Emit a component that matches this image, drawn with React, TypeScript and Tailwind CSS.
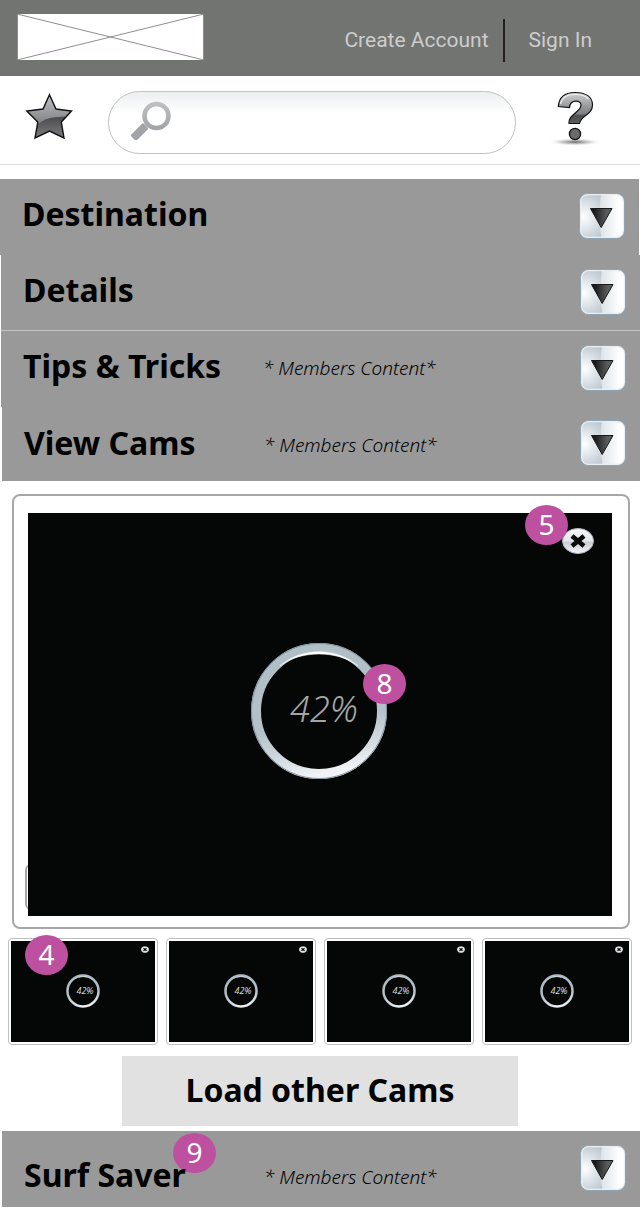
import { useId } from "react";

function StarIcon() {
  return (
    <svg viewBox="0 0 48 47" className="h-[47px] w-12" aria-hidden="true">
      <defs>
        <linearGradient id="star-fill" x1="0" y1="0" x2="0" y2="1">
          <stop offset="0" stopColor="#c4c5c8" />
          <stop offset="0.55" stopColor="#8b8c8f" />
          <stop offset="1" stopColor="#77787a" />
        </linearGradient>
        <linearGradient id="star-shade" x1="0" y1="0" x2="0" y2="1">
          <stop offset="0" stopColor="#4b4b4d" />
          <stop offset="1" stopColor="#808183" />
        </linearGradient>
        <clipPath id="star-clip">
          <path d="M24.5 1.5 L31 16 L47 18 L36.3 29 L39 45 L24.5 38 L10 45 L12.8 29 L1.5 18 L18 16 Z" />
        </clipPath>
      </defs>
      <g clipPath="url(#star-clip)">
        <rect width="48" height="47" fill="url(#star-fill)" />
        <path d="M8 36 C16 26 27 23 42 24 L48 47 L0 47 Z" fill="url(#star-shade)" />
      </g>
      <path
        d="M24.5 1.8 L31 16 L46.5 18 L36.3 29 L39 45 L24.5 38 L10 45 L12.8 29 L1.8 18 L18 16 Z"
        fill="none"
        stroke="#111"
        strokeWidth="1.4"
      />
    </svg>
  );
}

function HelpIcon() {
  return (
    <svg viewBox="0 0 56 58" className="h-[58px] w-14" aria-hidden="true">
      <defs>
        <linearGradient id="help-fill" x1="0" y1="0" x2="0" y2="1">
          <stop offset="0" stopColor="#d0d1d3" />
          <stop offset="0.5" stopColor="#929396" />
          <stop offset="0.68" stopColor="#808184" />
          <stop offset="0.75" stopColor="#4c4d4f" />
          <stop offset="1" stopColor="#5d5e60" />
        </linearGradient>
        <radialGradient id="help-shadow">
          <stop offset="0" stopColor="#555" stopOpacity="0.9" />
          <stop offset="0.5" stopColor="#999" stopOpacity="0.5" />
          <stop offset="1" stopColor="#fff" stopOpacity="0" />
        </radialGradient>
      </defs>
      <ellipse cx="27" cy="52" rx="27" ry="4" fill="url(#help-shadow)" />
      <path
        d="M10.300 16.500 C11 7 17 2.500 27 2.500 C38 2.500 44.500 7 44.500 15 C44.500 25 32.500 25.500 31.500 33.500 L21 33.500 C20 24 33 22.500 33 15 C33 9.500 22 9.500 21.500 17.500 Z"
        fill="url(#help-fill)"
        stroke="#111"
        strokeWidth="1.200"
      />
      <path d="M12.500 14 C14 7 19 4.300 27 4.300 C33 4.300 38 6 40.500 9" fill="none" stroke="#ececed" strokeWidth="1.200" />
      <circle cx="27" cy="44" r="5.600" fill="#6a6b6d" stroke="#111" strokeWidth="1.300" />
    </svg>
  );
}

function SearchIcon() {
  return (
    <svg viewBox="0 0 42 40" className="h-10 w-[42px] shrink-0" aria-hidden="true">
      <defs>
        <linearGradient id="lens" x1="0" y1="0" x2="0" y2="1">
          <stop offset="0" stopColor="#bebfc0" />
          <stop offset="1" stopColor="#a2a4a6" />
        </linearGradient>
      </defs>
      <circle cx="26.500" cy="16" r="12" fill="none" stroke="url(#lens)" strokeWidth="4.500" />
      <rect x="-4" y="-9" width="8" height="18" rx="1.500" fill="#a2a4a9" transform="translate(9.500 32) rotate(45)" />
    </svg>
  );
}

function ToggleIcon() {
  const id = useId();
  return (
    <svg viewBox="0 0 46 46" className="size-[46px]" aria-hidden="true">
      <defs>
        <radialGradient id={id + "a"} cx="0.08" cy="0.52" r="0.65">
          <stop offset="0" stopColor="#ffffff" />
          <stop offset="1" stopColor="#b4c0ca" />
        </radialGradient>
        <linearGradient id={id + "b"} x1="0" y1="0" x2="1" y2="0">
          <stop offset="0" stopColor="#dce3e8" />
          <stop offset="0.8" stopColor="#fff" />
        </linearGradient>
        <linearGradient id={id + "c"} x1="0" y1="0" x2="1" y2="0">
          <stop offset="0.15" stopColor="#17191a" />
          <stop offset="0.75" stopColor="#5b5c5d" />
        </linearGradient>
      </defs>
      <rect x="0.5" y="0.5" width="45" height="45" rx="8" fill={`url(#${id}a)`} />
      <path d="M22 1 H37 A8 8 0 0 1 45 9 V37 A8 8 0 0 1 37 45 H22.500 C20 32 20 15 22 1 Z" fill={`url(#${id}b)`} />
      <rect x="1.500" y="1.500" width="43" height="43" rx="7" fill="none" stroke="#e8eef2" strokeWidth="1.500" />
      <rect x="0.5" y="0.5" width="45" height="45" rx="8" fill="none" stroke="#8fa4b2" />
      <path d="M11.500 15.500 H33 L22.200 34.500 Z" fill={`url(#${id}c)`} stroke="#17191a" />
    </svg>
  );
}

function CloseIcon({ className }: { className: string }) {
  const id = useId();
  return (
    <svg viewBox="0 0 32 26" className={className} aria-hidden="true">
      <defs>
        <linearGradient id={id} x1="0" y1="0" x2="0" y2="1">
          <stop offset="0" stopColor="#f8f9fa" />
          <stop offset="0.5" stopColor="#e2e5e9" />
          <stop offset="0.55" stopColor="#c8ced4" />
          <stop offset="1" stopColor="#f4f5f7" />
        </linearGradient>
      </defs>
      <ellipse cx="16" cy="13" rx="15.500" ry="12.500" fill={`url(#${id})`} stroke="#aeb9c1" />
      <path d="M10 8 L22 18 M22 8 L10 18" stroke="#0a0a0a" strokeWidth="4.600" />
    </svg>
  );
}

function ProgressRing({ className }: { className: string }) {
  const id = useId();
  return (
    <svg viewBox="0 0 138 138" className={className} aria-hidden="true">
      <defs>
        <linearGradient id={id + "a"} x1="0.3" y1="0" x2="0.5" y2="1">
          <stop offset="0" stopColor="#b0bec6" />
          <stop offset="0.6" stopColor="#b4c1c9" />
          <stop offset="0.85" stopColor="#d5dde2" />
          <stop offset="1" stopColor="#f1f3f6" />
        </linearGradient>
      </defs>
      <circle cx="69" cy="69" r="63" fill="none" stroke={`url(#${id}a)`} strokeWidth="10" />
      <circle cx="69" cy="69" r="67.500" fill="none" stroke="#8194a0" strokeWidth="1" />
      <path d="M30 24 C52 5 86 5 108 24 C88 8 50 8 30 24 Z" fill="#fff" stroke="#fff" strokeWidth="0.500" />
    </svg>
  );
}

function Badge({ value, className }: { value: number; className: string }) {
  return (
    <span
      className={`absolute flex h-10 w-[43px] items-center justify-center rounded-[50%] bg-[#bd519f] pb-0.5 font-['Noto_Sans',sans-serif] text-[28px] leading-none font-normal text-white ${className}`}
    >
      {value}
    </span>
  );
}

type SectionProps = {
  title: string;
  members?: boolean;
  badge?: number;
  className: string;
  textClassName?: string;
};

function Section({ title, members, badge, className, textClassName = "pb-1" }: SectionProps) {
  return (
    <section className={`flex items-center bg-[#999] pl-[22px] ${className}`}>
      <div className={`flex items-center ${textClassName}`}>
        <h2 className="w-60 shrink-0 pb-0.5 text-[32px] leading-10 font-bold">
          <span className="relative isolate">
            {title}
            {badge !== undefined && <Badge value={badge} className="-top-5 -right-[30px] -z-10" />}
          </span>
        </h2>
        {members && <p className="pt-0.5 text-[19px] leading-6 font-light italic">* Members Content*</p>}
      </div>
      <button type="button" aria-label={`Expand ${title}`} className="mr-3.5 mb-0.5 ml-auto shrink-0">
        <ToggleIcon />
      </button>
    </section>
  );
}

function Thumbnail({ index }: { index: number }) {
  return (
    <li className="relative rounded border border-[#bfc0c2] bg-white p-[2px]">
      <div className="relative flex aspect-[144/101] items-center justify-center bg-[#050706] pb-0.5">
        <ProgressRing className="size-[34px]" />
        <span className="absolute pl-1 text-[9px] leading-none text-[#d5d5d5] italic">42%</span>
        <button type="button" aria-label={`Close cam ${index}`} className="absolute top-[5px] right-1.5">
          <CloseIcon className="h-[7px] w-2" />
        </button>
      </div>
      {index === 1 && <Badge value={4} className="-top-1 left-4" />}
    </li>
  );
}

export default function App() {
  return (
    <div className="bg-white pb-1 font-['Noto_Sans',sans-serif] text-black">
      <header className="flex h-[76px] items-center justify-between bg-[#727472] pr-12 pl-[17px]">
        <svg viewBox="0 0 187 46" className="mb-0.5 h-[46px] w-[187px] bg-white" role="img" aria-label="Logo">
          <path d="M0.500 0 V46 M186.500 0 V46 M0 0 L187 46 M187 0 L0 46" stroke="#8d8e8d" fill="none" />
        </svg>
        <nav className="flex items-center pt-1 font-['Roboto',sans-serif] text-[21px] leading-7 text-[#cccdcc]">
          <a href="#create-account">Create Account</a>
          <span className="mr-6 ml-3.5 h-[43px] w-0.5 bg-[#231f20]" />
          <a href="#sign-in">Sign In</a>
        </nav>
      </header>

      <div className="flex h-[89px] items-center border-b border-[#dcdcdc] pr-9 pl-[25px]">
        <button type="button" aria-label="Favorites" className="mb-2 shrink-0">
          <StarIcon />
        </button>
        <div className="mt-1 mr-8 ml-[35px] flex h-[63px] min-w-0 flex-1 items-center rounded-full border border-[#bfc1c2] bg-linear-to-b from-[#eceeef] to-white to-35% pr-6 pb-1 pl-[21px]">
          <SearchIcon />
          <input
            type="search"
            aria-label="Search"
            className="ml-3 h-full min-w-0 flex-1 bg-transparent text-xl outline-none"
          />
        </div>
        <button type="button" aria-label="Help" className="mb-0.5 shrink-0">
          <HelpIcon />
        </button>
      </div>

      <main className="pt-3.5">
        <Section title="Destination" className="mr-px h-[76px]" />
        <Section title="Details" className="ml-px h-[76px] border-b border-[#c4c4c4]" />
        <Section title="Tips & Tricks" members className="ml-px h-[76px]" />
        <Section title="View Cams" members className="ml-0.5 h-[74px]" textClassName="pb-0" />

        <div className="mt-[13px] mr-2.5 ml-3 rounded-lg border-2 border-[#a7a7aa] pt-[17px] pr-4 pb-[11px] pl-3.5">
          <div className="relative isolate">
            <span className="absolute bottom-1.5 -left-[3px] -z-10 h-[46px] w-4 rounded-md border-2 border-[#a7a7aa]" />
            <div className="relative flex aspect-[584/403] items-center justify-center bg-[#050706] pr-0.5 pb-2">
              <div className="relative flex items-center justify-center">
                <ProgressRing className="size-[138px]" />
                <span className="absolute pb-1 pl-2.5 text-[36px] leading-none font-light text-[#a5a5a7] italic">42%</span>
                <Badge value={8} className="top-[22px] -right-[18px]" />
              </div>
              <button type="button" aria-label="Close cam" className="absolute top-[15px] right-[18px]">
                <CloseIcon className="h-[26px] w-8" />
              </button>
              <Badge value={5} className="-top-2 right-11" />
            </div>
          </div>
        </div>

        <ul className="mx-2 mt-[9px] grid grid-cols-4 gap-2">
          {[1, 2, 3, 4].map((n) => (
            <Thumbnail key={n} index={n} />
          ))}
        </ul>

        <button
          type="button"
          className="mx-auto mt-[11px] mb-[5px] block h-[70px] w-[396px] max-w-full bg-[#e0e1e0] pb-0.5 text-[32px] leading-10 font-bold"
        >
          Load other Cams
        </button>

        <Section title="Surf Saver" members badge={9} className="ml-0.5 h-[76px]" textClassName="pt-3.5" />
      </main>
    </div>
  );
}
